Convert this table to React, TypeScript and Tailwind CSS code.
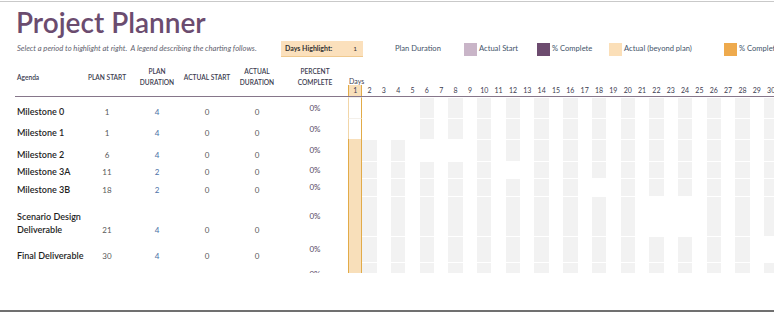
import React from 'react';

interface Task {
  name: string[];
  start: number;
  duration: number;
  height: string;
}

const DAYS = Array.from({ length: 30 }, (_, i) => i + 1);

const tasks: Task[] = [
  { name: ['Milestone 0'], start: 1, duration: 4, height: 'h-[21px]' },
  { name: ['Milestone 1'], start: 1, duration: 4, height: 'h-[21px]' },
  { name: ['Milestone 2'], start: 6, duration: 4, height: 'h-[22px]' },
  { name: ['Milestone 3A'], start: 11, duration: 2, height: 'h-[17px]' },
  { name: ['Milestone 3B'], start: 18, duration: 2, height: 'h-[18px]' },
  { name: ['Scenario Design', 'Deliverable'], start: 21, duration: 4, height: 'h-[40px]' },
  { name: ['Final Deliverable'], start: 30, duration: 4, height: 'h-[26px]' },
];

const DayCells: React.FC<{ start: number; duration: number }> = ({ start, duration }) => {
  const inPlan = (day: number) => day >= start && day < start + duration;
  return (
    <div className="flex h-full">
      {DAYS.map(day => {
        if (day === 1) {
          return (
            <div
              key={day}
              className={
                inPlan(day)
                  ? 'w-[14.35px] shrink-0 h-full border-l border-l-[#f2d6a8] border-r border-r-[#e2ab48] border-t border-t-[#f4f0ea]'
                  : 'w-[14.35px] shrink-0 h-full border-x border-[#e2ab48] bg-[#f8dfba]'
              }
            />
          );
        }
        const shaded = day % 2 === 0 && !inPlan(day);
        return (
          <div key={day} className="w-[14.35px] shrink-0 h-full pt-px">
            {shaded && <div className="h-full bg-[#f2f2f2]" />}
          </div>
        );
      })}
    </div>
  );
};

const HeaderCell: React.FC<{ lines: string[]; width: string; align?: string }> = ({
  lines,
  width,
  align = 'text-center',
}) => (
  <div className={`${width} shrink-0 flex items-center pt-px`}>
    <div className={`w-full ${align} text-[6.6px] leading-[11px] text-[#3c3c50] font-semibold`}>
      {lines.map(line => (
        <div key={line}>{line}</div>
      ))}
    </div>
  </div>
);

const LegendItem: React.FC<{ width: string; swatch?: string; label: string }> = ({
  width,
  swatch,
  label,
}) => (
  <div className={`${width} shrink-0 flex items-center`}>
    {swatch && <div className={`w-[13px] h-[13px] shrink-0 ${swatch}`} />}
    <span className="ml-[2px] text-[7.6px] text-[#44546a] whitespace-nowrap">{label}</span>
  </div>
);

const App: React.FC = () => {
  return (
    <div
      className="w-[774px] h-[313px] bg-white overflow-hidden flex flex-col"
      style={{ fontFamily: 'Lato, "Open Sans", sans-serif' }}
    >
      <div className="mt-px h-px bg-[#c9c9c9] shrink-0" />

      <h1 className="mt-[6px] ml-[16px] h-[27px] text-[28px] leading-none text-[#6b4c6f] font-semibold shrink-0 whitespace-nowrap">
        Project Planner
      </h1>

      <div className="mt-[6px] h-[16px] flex items-center shrink-0">
        <p className="w-[281px] shrink-0 pl-[17px] text-[7.6px] italic text-[#5f5f6e] whitespace-pre">
          Select a period to highlight at right.  A legend describing the charting follows.
        </p>
        <div className="w-[82px] h-[16px] shrink-0 flex items-center bg-[#fbe0bc] border-b border-[#efc98f] pl-[4px] pr-[6px]">
          <span className="text-[7px] font-bold text-[#333333]">Days Highlight:</span>
          <span className="ml-auto text-[6.5px] text-[#333333]">1</span>
        </div>
        <div className="w-[30px] shrink-0" />
        <LegendItem width="w-[71px]" label="Plan Duration" />
        <LegendItem width="w-[73px]" swatch="bg-[#c9b5c8]" label="Actual Start" />
        <LegendItem width="w-[72px]" swatch="bg-[#6d4c6f]" label="% Complete" />
        <LegendItem width="w-[115px]" swatch="bg-[#fbdfb8]" label="Actual (beyond plan)" />
        <LegendItem width="w-[60px]" swatch="bg-[#eeaa4d]" label="% Complete (beyond plan)" />
      </div>

      <div className="ml-[15px] h-[40px] flex border-b border-[#86768a] shrink-0">
        <div className="w-[333px] shrink-0 flex pl-[2px]">
          <HeaderCell lines={['Agenda']} width="w-[65px]" align="text-left font-normal" />
          <HeaderCell lines={['PLAN START']} width="w-[50px]" />
          <HeaderCell lines={['PLAN', 'DURATION']} width="w-[50px]" />
          <HeaderCell lines={['ACTUAL START']} width="w-[50px]" />
          <HeaderCell lines={['ACTUAL', 'DURATION']} width="w-[50px]" />
          <HeaderCell lines={['PERCENT', 'COMPLETE']} width="w-[66px]" />
        </div>
        <div className="flex flex-col justify-end">
          <div className="pl-[1px] text-[7px] leading-[8px] text-[#3c3c50]">Days</div>
          <div className="flex h-[11px]">
            {DAYS.map(day => (
              <div
                key={day}
                className={
                  day === 1
                    ? 'w-[14.35px] shrink-0 flex items-center justify-center text-[7px] text-[#3c3c50] bg-[#f8dfba] border-x border-[#e2ab48]'
                    : 'w-[14.35px] shrink-0 flex items-center justify-center text-[7px] text-[#3c3c50]'
                }
              >
                {day}
              </div>
            ))}
          </div>
        </div>
      </div>

      {tasks.map(task => (
        <div key={task.name.join(' ')} className={`${task.height} flex shrink-0`}>
          <div className="w-[348px] shrink-0 flex pl-[17px]">
            <div className="w-[65px] shrink-0 flex items-end text-[9px] leading-[12.5px] font-semibold text-[#1e1e1e]">
              <div>
                {task.name.map(line => (
                  <div key={line} className="whitespace-nowrap">
                    {line}
                  </div>
                ))}
              </div>
            </div>
            <div className="w-[50px] shrink-0 flex items-end justify-center text-[8px] leading-[11px] text-[#595959]">
              {task.start}
            </div>
            <div className="w-[50px] shrink-0 flex items-end justify-center text-[8px] leading-[11px] text-[#4a6fa5]">
              {task.duration}
            </div>
            <div className="w-[50px] shrink-0 flex items-end justify-center text-[8px] leading-[11px] text-[#595959]">
              0
            </div>
            <div className="w-[50px] shrink-0 flex items-end justify-center text-[8px] leading-[11px] text-[#595959]">
              0
            </div>
            <div className="w-[66px] shrink-0 flex items-center justify-center text-[8px] text-[#55465f]">
              0%
            </div>
          </div>
          <DayCells start={task.start} duration={task.duration} />
        </div>
      ))}

      <div className="h-[11px] flex shrink-0 overflow-hidden">
        <div className="w-[348px] shrink-0 flex pl-[282px]">
          <div className="w-[66px] shrink-0 pt-[7px] text-center text-[8px] leading-[11px] text-[#55465f]">
            0%
          </div>
        </div>
        <DayCells start={0} duration={0} />
      </div>

      <div className="flex-1" />
      <div className="h-[2px] bg-[#707070] shrink-0 mb-px" />
    </div>
  );
};

export default App;
